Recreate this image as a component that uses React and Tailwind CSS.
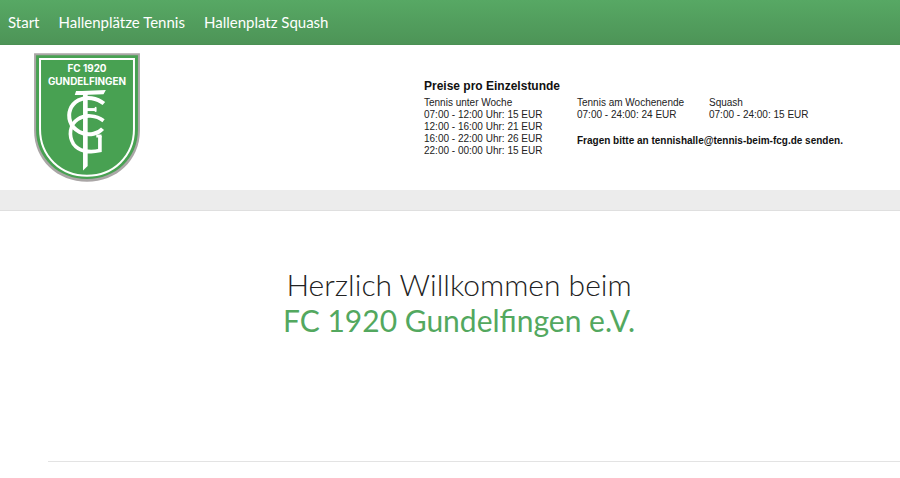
const links = ["Start", "Hallenplätze Tennis", "Hallenplatz Squash"];

const weekday = [
  "07:00 - 12:00 Uhr: 15 EUR",
  "12:00 - 16:00 Uhr: 21 EUR",
  "16:00 - 22:00 Uhr: 26 EUR",
  "22:00 - 00:00 Uhr: 15 EUR",
];

function Crest() {
  return (
    <svg viewBox="39 38 324 390" className="h-[129px] w-[108px]" role="img" aria-label="FC 1920 Gundelfingen">
      <path d="M41 39H361V272C361 362 290 427 201 427S41 362 41 272Z" fill="#aaa6a6" />
      <path d="M47 45H355V270C355 356 287 419 201 419S47 356 47 270Z" fill="#48a152" />
      <path d="M59 56H343V268C343 351 280 409 201 409S59 351 59 268Z" fill="none" stroke="#fff" strokeWidth="6" />
      <g fill="#fff" fontFamily="Inter, 'Liberation Sans', sans-serif" fontWeight="700" textAnchor="middle">
        <text x="201" y="95" fontSize="30">FC 1920</text>
        <text x="201" y="134" fontSize="30">GUNDELFINGEN</text>
      </g>
      <g fill="none" stroke="#fff">
        <path d="M164 165L168 153H186L258 150L251 163L186 165Z" fill="#fff" stroke="none" />
        <path d="M189 158H203V380L189 393Z" fill="#fff" stroke="none" />
        <path d="M201 209H229" strokeWidth="9" />
        <path d="M227 201V216" strokeWidth="5" />
        <path d="M252 191C232 174 199 168 175 181C151 194 142 220 150 245C159 273 193 289 221 282C233 279 242 274 248 267" strokeWidth="12" />
        <path d="M251 243C229 226 196 223 173 238C148 254 145 289 160 313C175 334 206 341 240 333V289" strokeWidth="11" />
        <path d="M229 289H245" strokeWidth="9" />
      </g>
    </svg>
  );
}

export default function App() {
  return (
    <div className="bg-white font-['Lato','Liberation_Sans',sans-serif] text-[#222]">
      <nav className="flex h-[45px] items-center gap-[19px] border-b border-[#4b9054] bg-linear-to-b from-[#57a864] to-[#4d9457] px-2 text-[15px] text-white">
        {links.map((label) => (
          <a key={label} href="#">{label}</a>
        ))}
      </nav>

      <header className="flex justify-between pt-2 pr-[51px] pb-2 pl-[33px]">
        <Crest />
        <section className="pt-[26px] font-['Liberation_Sans',Arial,sans-serif] text-[10px] leading-3 text-[#222]">
          <h2 className="mb-1 text-xs leading-[14px] font-bold text-[#111]">Preise pro Einzelstunde</h2>
          <div className="grid grid-cols-[153px_132px_140px] grid-rows-[auto_1fr]">
            <div className="row-span-2">
              <p>Tennis unter Woche</p>
              {weekday.map((row) => (
                <p key={row}>{row}</p>
              ))}
            </div>
            <div>
              <p>Tennis am Wochenende</p>
              <p>07:00 - 24:00: 24 EUR</p>
            </div>
            <div>
              <p>Squash</p>
              <p>07:00 - 24:00: 15 EUR</p>
            </div>
            <p className="col-span-2 pt-[14px] font-bold text-[#111]">
              Fragen bitte an tennishalle@tennis-beim-fcg.de senden.
            </p>
          </div>
        </section>
      </header>

      <div className="h-[21px] border-b border-[#dfdfdf] bg-[#ececec]" />

      <main>
        <h1 className="pt-[55px] pl-[18px] text-center text-[30px] leading-9 font-light">
          Herzlich Willkommen beim
          <span className="block font-normal text-[#53a85f]">FC 1920 Gundelfingen e.V.</span>
        </h1>
        <hr className="mt-[123px] ml-12 border-[#e3e3e3]" />
      </main>
    </div>
  );
}
